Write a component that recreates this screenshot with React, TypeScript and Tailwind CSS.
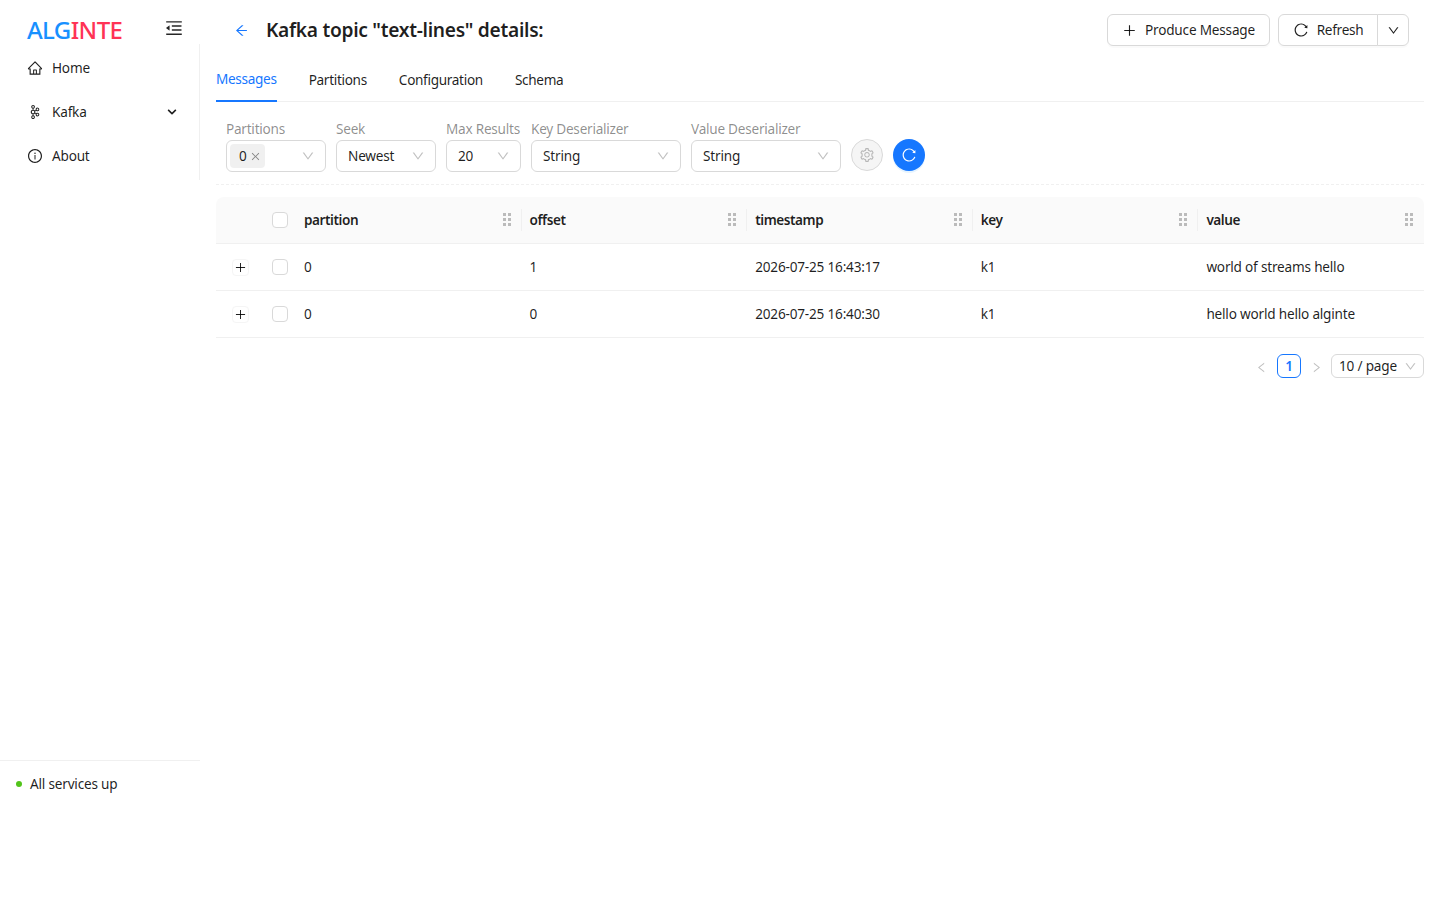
import React from 'react';
import {
  AiOutlineArrowLeft,
  AiOutlineClose,
  AiOutlineDown,
  AiOutlineHome,
  AiOutlineInfoCircle,
  AiOutlineLeft,
  AiOutlineMenuFold,
  AiOutlinePlus,
  AiOutlineReload,
  AiOutlineRight,
  AiOutlineSetting,
} from 'react-icons/ai';
import { SiApachekafka } from 'react-icons/si';
import { FaChevronDown } from 'react-icons/fa';

const columns = ['partition', 'offset', 'timestamp', 'key', 'value'];

const rows = [
  ['0', '1', '2026-07-25 16:43:17', 'k1', 'world of streams hello'],
  ['0', '0', '2026-07-25 16:40:30', 'k1', 'hello world hello alginte'],
];

const tabs = ['Messages', 'Partitions', 'Configuration', 'Schema'];

function NavItem({ icon, label, extra }: { icon: React.ReactNode; label: string; extra?: React.ReactNode }) {
  return (
    <div className="flex h-11 items-center pl-[27px] pr-[22px] text-[#000000e0]">
      <span className="flex w-[25px] items-center text-[16px]">{icon}</span>
      <span className="flex-1">{label}</span>
      {extra}
    </div>
  );
}

function Field({ label, width, children }: { label: string; width: string; children: React.ReactNode }) {
  return (
    <div className={`flex flex-col ${width}`}>
      <div className="h-[22px] whitespace-nowrap leading-[22px] tracking-[-0.25px] text-[#00000073]">{label}</div>
      <div className="flex h-8 items-center justify-between rounded-md border border-[#d9d9d9] bg-white pl-[11px] pr-[10px]">
        {children}
        <AiOutlineDown className="text-[14px] text-[#00000040]" />
      </div>
    </div>
  );
}

function Checkbox() {
  return <span className="block h-4 w-4 rounded border border-[#d9d9d9] bg-white" />;
}

function Holder() {
  return (
    <svg width="8" height="13" viewBox="0 0 8 13" className="mr-[3px] shrink-0 fill-[#00000040]">
      <rect x="0" y="0" width="3" height="3" />
      <rect x="5" y="0" width="3" height="3" />
      <rect x="0" y="5" width="3" height="3" />
      <rect x="5" y="5" width="3" height="3" />
      <rect x="0" y="10" width="3" height="3" />
      <rect x="5" y="10" width="3" height="3" />
    </svg>
  );
}

export default function App() {
  return (
    <div className="flex h-screen bg-white font-['Noto_Sans',sans-serif] text-[13.6px] tracking-[-0.2px] text-[#000000e0]">
      <aside className="flex h-full w-[200px] shrink-0 flex-col">
        <div className="flex h-11 items-center justify-between pl-[27px] pr-[16px]">
          <div className="mt-[15px] text-[24px] font-medium tracking-[-0.6px]">
            <span className="text-[#1890ff]">ALG</span>
            <span className="text-[#ff3355]">INTE</span>
          </div>
          <AiOutlineMenuFold className="mt-[12px] text-[20px] text-[#000000d9]" />
        </div>
        <nav className="border-r border-[#f0f0f0] py-[2px]">
          <NavItem icon={<AiOutlineHome />} label="Home" />
          <NavItem
            icon={<SiApachekafka className="ml-[1px] text-[14px]" />}
            label="Kafka"
            extra={<FaChevronDown className="text-[10px]" />}
          />
          <NavItem icon={<AiOutlineInfoCircle />} label="About" />
        </nav>
        <div className="mt-auto h-[140px] border-t border-[#f0f0f0] pl-4 pt-3">
          <div className="flex items-center gap-2 leading-[22px]">
            <span className="h-1.5 w-1.5 rounded-full bg-[#52c41a]" />
            All services up
          </div>
        </div>
      </aside>

      <main className="min-w-0 flex-1 pl-4 pr-4">
        <header className="flex h-[56px] items-start justify-between pr-[15px] pt-[14px]">
          <div className="flex h-8 items-center pl-[18px]">
            <AiOutlineArrowLeft className="text-[15px] text-[#1677ff]" />
            <h1 className="ml-[17px] text-[19.2px] font-semibold tracking-[-0.3px] text-[#000000e0]">
              Kafka topic "text-lines" details:
            </h1>
          </div>
          <div className="flex gap-2">
            <button className="flex h-8 w-[163px] items-center justify-center gap-[8px] rounded-md border border-[#d9d9d9] bg-white shadow-[0_2px_0_rgba(0,0,0,0.02)]">
              <AiOutlinePlus className="text-[15px]" />
              Produce Message
            </button>
            <div className="flex h-8 rounded-md shadow-[0_2px_0_rgba(0,0,0,0.02)]">
              <button className="flex w-[100px] items-center justify-center gap-[8px] rounded-l-md border border-[#d9d9d9] bg-white tracking-[-0.3px]">
                <AiOutlineReload className="text-[16px]" />
                Refresh
              </button>
              <button className="-ml-px flex w-8 items-center justify-center rounded-r-md border border-[#d9d9d9] bg-white">
                <AiOutlineDown className="text-[13px]" />
              </button>
            </div>
          </div>
        </header>

        <div className="flex h-[46px] gap-8 border-b border-[#f0f0f0] tracking-[-0.32px]">
          {tabs.map((tab, i) => (
            <div
              key={tab}
              className={
                i === 0
                  ? 'flex h-[46px] items-center border-b-2 border-[#1677ff] pt-[2px] text-[#1677ff]'
                  : 'flex h-[46px] items-center pt-[2px]'
              }
            >
              {tab}
            </div>
          ))}
        </div>

        <div className="flex items-end gap-[10px] border-b border-dashed border-[#f0f0f0] px-[10px] pb-3 pt-4">
          <Field label="Partitions" width="w-[100px]">
            <span className="-ml-[8px] flex h-6 items-center gap-[3px] rounded bg-[#0000000f] pl-[9px] pr-1">
              0
              <AiOutlineClose className="text-[11px] text-[#00000073]" />
            </span>
          </Field>
          <Field label="Seek" width="w-[100px]">
            <span>Newest</span>
          </Field>
          <Field label="Max Results" width="w-[75px]">
            <span>20</span>
          </Field>
          <Field label="Key Deserializer" width="w-[150px]">
            <span>String</span>
          </Field>
          <Field label="Value Deserializer" width="w-[150px]">
            <span>String</span>
          </Field>
          <button className="mb-px flex h-8 w-8 items-center justify-center rounded-full border border-[#d9d9d9] bg-[#0000000a] text-[#00000040]">
            <AiOutlineSetting className="text-[16px]" />
          </button>
          <button className="mb-px flex h-8 w-8 items-center justify-center rounded-full bg-[#1677ff] text-white shadow-[0_2px_0_rgba(5,145,255,0.1)]">
            <AiOutlineReload className="text-[16px]" />
          </button>
        </div>

        <table className="mt-3 w-full table-fixed border-separate border-spacing-0">
          <colgroup>
            <col className="w-12" />
            <col className="w-8" />
          </colgroup>
          <thead>
            <tr className="h-[47px]">
              <th className="rounded-tl-lg border-b border-[#f0f0f0] bg-[#fafafa]" />
              <th className="border-b border-[#f0f0f0] bg-[#fafafa] px-2">
                <Checkbox />
              </th>
              {columns.map((col, i) => (
                <th
                  key={col}
                  className={`relative border-b border-[#f0f0f0] bg-[#fafafa] px-2 text-left font-semibold tracking-[-0.45px] ${i === 4 ? 'rounded-tr-lg' : ''}`}
                >
                  <div className="flex items-center justify-between">
                    {col}
                    <Holder />
                  </div>
                  {i < 4 && (
                    <span className="absolute right-0 top-[12px] h-[22px] w-px bg-[#f0f0f0]" />
                  )}
                </th>
              ))}
            </tr>
          </thead>
          <tbody>
            {rows.map((row, r) => (
              <tr key={r} className="h-[47px]">
                <td className="border-b border-[#f0f0f0]">
                  <span className="ml-4 mt-px flex h-[17px] w-[17px] items-center justify-center rounded border border-[#f5f5f5] bg-white">
                    <AiOutlinePlus className="text-[13px] text-[#000000e0]" />
                  </span>
                </td>
                <td className="border-b border-[#f0f0f0] px-2">
                  <Checkbox />
                </td>
                {row.map((cell, c) => (
                  <td key={c} className="truncate border-b border-[#f0f0f0] px-2">
                    {cell}
                  </td>
                ))}
              </tr>
            ))}
          </tbody>
        </table>

        <div className="mt-4 flex items-center justify-end">
          <AiOutlineLeft className="mr-[9px] mt-[3px] text-[13px] text-[#00000040]" />
          <span className="flex h-6 w-6 items-center justify-center rounded-md border border-[#1677ff] font-semibold text-[#1677ff]">
            1
          </span>
          <AiOutlineRight className="ml-[9px] mt-[3px] text-[13px] text-[#00000040]" />
          <div className="ml-[8px] flex h-6 w-[93px] items-center justify-between rounded-md border border-[#d9d9d9] pl-[7px] pr-[6px]">
            <span>10 / page</span>
            <AiOutlineDown className="text-[13px] text-[#00000040]" />
          </div>
        </div>
      </main>
    </div>
  );
}
